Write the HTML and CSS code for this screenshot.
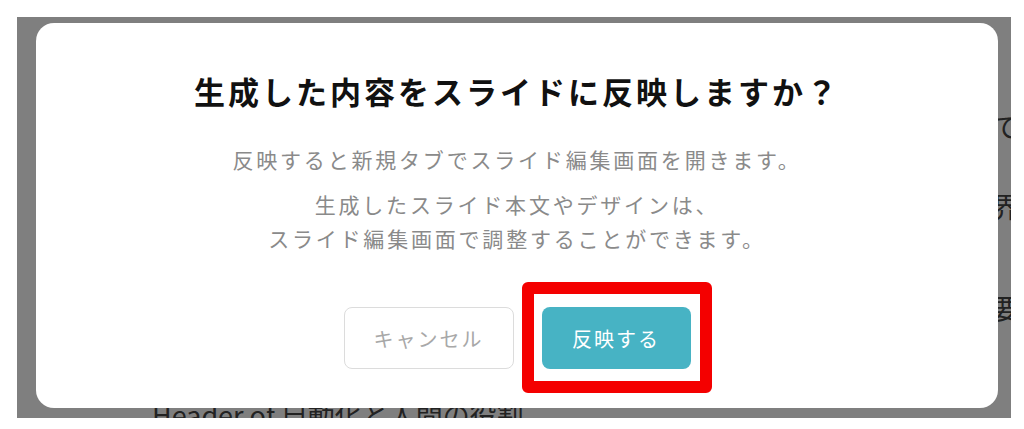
FILE: index.html
```html
<!DOCTYPE html>
<html lang="ja">
<head>
    <meta charset="UTF-8">
    <meta name="viewport" content="width=device-width, initial-scale=1.0">
    <link rel="stylesheet" href="styles.css">
</head>
<body>
    <div class="screen">
        <!-- page behind the dialog -->
        <div class="page">
            <div class="line line-a"><span>て</span></div>
            <div class="line line-b"><span>界</span></div>
            <div class="line line-c"><span>要</span></div>
            <div class="page-heading">Header of 自動化と人間の役割</div>
        </div>

        <div class="overlay">
            <div class="modal">
                <h1 class="modal-title">生成した内容をスライドに反映しますか？</h1>
                <p class="modal-text first">反映すると新規タブでスライド編集画面を開きます。</p>
                <p class="modal-text">生成したスライド本文やデザインは、<br>スライド編集画面で調整することができます。</p>
                <div class="modal-actions">
                    <button class="btn btn-cancel">キャンセル</button>
                    <span class="highlight">
                        <button class="btn btn-primary">反映する</button>
                    </span>
                </div>
            </div>
        </div>
    </div>
</body>
</html>
```

FILE: styles.css
```css
body {
    margin: 0;
    background: #fff;
    font-family: "Noto Sans CJK JP", "Noto Sans", sans-serif;
}
.screen {
    position: relative;
    margin: 17px 13px 11px 17px;
    height: 401px;
    overflow: hidden;
    background: #fff;
}

/* content under the overlay */
.page {
    display: flex;
    flex-direction: column;
    padding-left: 135px;
    color: #444;
}
.line {
    height: 40px;
    line-height: 40px;
    font-size: 28px;
    text-align: right;
    margin-right: -9px;
}
.line-a {
    margin-top: 89px;
}
.line-b {
    margin-top: 40px;
}
.line-c {
    margin-top: 62px;
}
.page-heading {
    margin-top: 69px;
    font-size: 27px;
    line-height: 36px;
    white-space: nowrap;
}

.overlay {
    position: absolute;
    inset: 0;
    display: flex;
    padding: 6px 13px 10px 19px;
    background: rgba(0, 0, 0, 0.5);
}
.modal {
    flex: 1;
    display: flex;
    flex-direction: column;
    align-items: center;
    padding-top: 45px;
    background: #fff;
    border-radius: 18px;
}
.modal-title {
    margin: 0;
    font-size: 31px;
    font-weight: 700;
    line-height: 45px;
    letter-spacing: 3px;
    color: #111;
}
.modal-text {
    margin: 11px 0 0;
    font-size: 21px;
    line-height: 34px;
    letter-spacing: 2.8px;
    text-align: center;
    color: #8a8a8a;
}
.modal-text.first {
    margin-top: 29px;
}
.modal-actions {
    display: flex;
    gap: 28px;
    margin-top: 52px;
}
.btn {
    height: 62px;
    padding: 0;
    border-radius: 8px;
    font-family: inherit;
    font-size: 20px;
    letter-spacing: 2px;
    white-space: nowrap;
    cursor: pointer;
}
.btn-cancel {
    width: 170px;
    background: #fff;
    border: 1px solid #dcdcdc;
    color: #a8a8a8;
}
.btn-primary {
    width: 149px;
    background: #47b3c4;
    border: none;
    color: #fff;
}

/* red annotation box */
.highlight {
    position: relative;
    display: flex;
}
.highlight::after {
    content: "";
    position: absolute;
    top: -25px;
    bottom: -24px;
    left: -20px;
    right: -21px;
    border: 12px solid #f40000;
    border-radius: 6px;
}
```
